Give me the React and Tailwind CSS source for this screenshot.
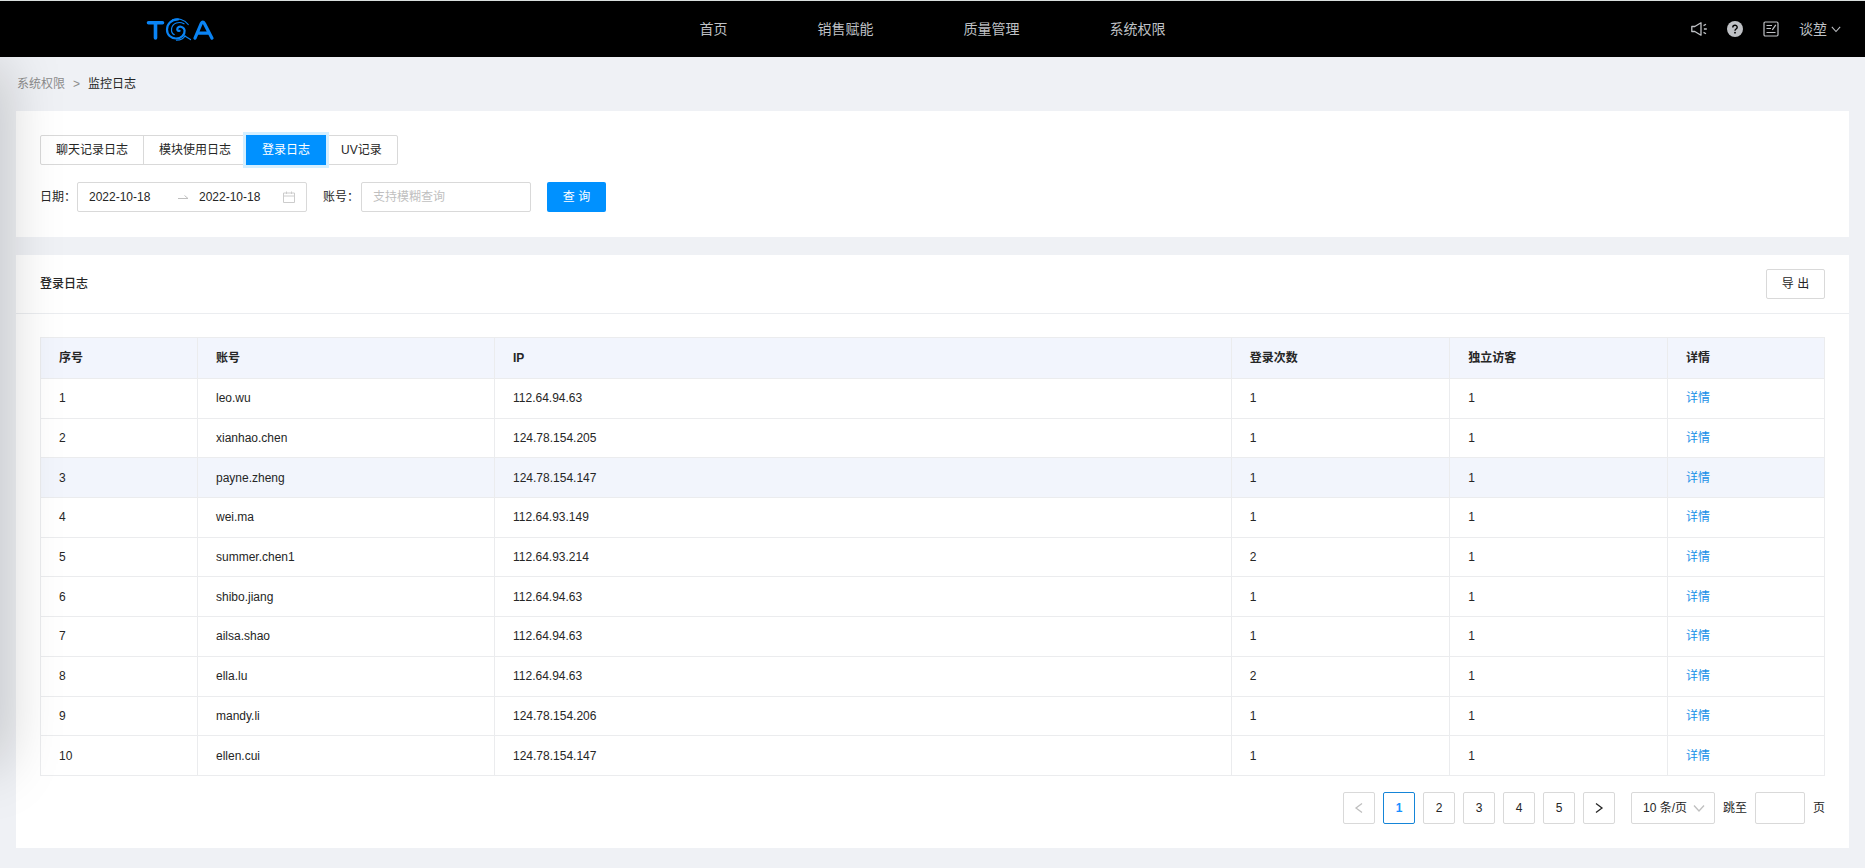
import React, { useState } from 'react';

const NAV = ['首页', '销售赋能', '质量管理', '系统权限'];
const TABS = ['聊天记录日志', '模块使用日志', '登录日志', 'UV记录'];
const HEADERS = ['序号', '账号', 'IP', '登录次数', '独立访客', '详情'];
const ROWS = [
  ['leo.wu', '112.64.94.63', 1, 1],
  ['xianhao.chen', '124.78.154.205', 1, 1],
  ['payne.zheng', '124.78.154.147', 1, 1],
  ['wei.ma', '112.64.93.149', 1, 1],
  ['summer.chen1', '112.64.93.214', 2, 1],
  ['shibo.jiang', '112.64.94.63', 1, 1],
  ['ailsa.shao', '112.64.94.63', 1, 1],
  ['ella.lu', '112.64.94.63', 2, 1],
  ['mandy.li', '124.78.154.206', 1, 1],
  ['ellen.cui', '124.78.154.147', 1, 1],
];

function Logo() {
  return (
    <svg width="70" height="26" viewBox="0 0 70 26" fill="none" stroke="#0a84f5" role="img" aria-label="TGA">
      <path d="M3.5 6.8H17.500M10.500 7V22" strokeWidth="3.6" strokeLinecap="round" />
      <path d="M50 22.200L56.200 7.500Q57.800 4.800 59.400 7.500L67 22.200M53 17.200H64.500" strokeWidth="3.200" strokeLinecap="round" strokeLinejoin="round" />
      <path d="M33 3.500C26 3.500 22 8 22 13.500C22 19 26 22.500 31 22.500C36.500 22.500 40 18.500 39.600 14.500C39.200 10.800 34.500 9.500 32.600 12C31.600 13.800 32.800 15.500 34.600 14.800" strokeWidth="2.200" strokeLinecap="round" />
      <path d="M43.200 8.500C39.500 3.500 33 1.800 27.500 3.800M39 7.800C34 5 27.500 7 26.600 12.500C26.200 15.500 27.500 17.800 29.200 18.600M31.500 24.200C36 24.200 39 22 40 19.500M39.800 20L45.500 23.600" strokeWidth="1.200" strokeLinecap="round" />
    </svg>
  );
}

function SpeakerIcon() {
  return (
    <svg width="16" height="16" viewBox="0 0 16 16" fill="none" stroke="currentColor" strokeWidth="1.300" strokeLinejoin="round">
      <path d="M.8 5.500H3.800L10 1.800V14.200L3.800 10.500H.8Z" />
      <path d="M12.500 4.600L15 3.200M12.900 8H15.800M12.500 11.400L15 12.800" />
    </svg>
  );
}

function HelpIcon() {
  return (
    <svg width="16" height="16" viewBox="0 0 16 16">
      <circle cx="8" cy="8" r="8" fill="currentColor" />
      <path d="M5.800 6.400C5.800 3.600 10.200 3.600 10.200 6.300C10.200 8 8 8 8 9.700" fill="none" stroke="#000" strokeWidth="1.400" />
      <circle cx="8" cy="11.700" r=".9" fill="#000" />
    </svg>
  );
}

function FormIcon() {
  return (
    <svg width="16" height="16" viewBox="0 0 16 16" fill="none" stroke="currentColor" strokeWidth="1.200">
      <rect x="1" y="1" width="14" height="14" rx="1.200" />
      <path d="M3.500 4.500H9M3.500 7.500H8M3.500 11.500H12.500M12.800 3.800L9.300 8.800" />
    </svg>
  );
}

function Chevron({ dir, className }) {
  const d = {
    down: 'M1 3.500L6 9L11 3.500',
    left: 'M9 1.500L3 6L9 10.500',
    right: 'M3 1.500L9 6L3 10.500',
  }[dir];
  return (
    <svg width="12" height="12" viewBox="0 0 12 12" fill="none" stroke="currentColor" strokeWidth="1.300" className={className}>
      <path d={d} />
    </svg>
  );
}

function CalendarIcon() {
  return (
    <svg width="12" height="12" viewBox="0 0 12 12" fill="none" stroke="currentColor" className="text-[#cccccc]">
      <path d="M.5 2H11.500V11.500H.5ZM.5 5H11.500M3.500 .5V3M8.500 .5V3" />
    </svg>
  );
}

export default function App() {
  const [tab, setTab] = useState(2);
  const [page, setPage] = useState(1);
  const pageButton = 'flex size-8 items-center justify-center rounded-xs border bg-white';

  return (
    <div className="relative min-h-screen overflow-hidden bg-[#eff1f5] font-['Liberation_Sans','Noto_Sans_CJK_SC',sans-serif] text-xs text-[#262626]">
      <header className="relative z-20 grid h-[57px] grid-cols-[1fr_auto_1fr] items-center border-t border-[#d9dedd] bg-black text-sm text-[#bfc1c5]">
        <a href="#home" className="ml-[145px] justify-self-start"><Logo /></a>
        <nav className="flex">
          {NAV.map((n) => (
            <a key={n} href="#nav" className="px-[45px] leading-5">{n}</a>
          ))}
        </nav>
        <div className="mr-6 flex items-center gap-5 justify-self-end">
          <button type="button" aria-label="公告"><SpeakerIcon /></button>
          <button type="button" aria-label="帮助"><HelpIcon /></button>
          <button type="button" aria-label="表单"><FormIcon /></button>
          <button type="button" className="flex items-center gap-1">谈堃<Chevron dir="down" className="size-2.5" /></button>
        </div>
      </header>

      <div aria-hidden="true" className="pointer-events-none absolute -left-10 top-16 z-10 h-[700px] w-10 shadow-[0_0_60px_rgba(0,0,0,0.26)]" />

      <main className="px-4 pb-5">
        <nav className="flex h-[54px] items-center gap-2 pl-px text-[#8c8c8c]">
          <a href="#system">系统权限</a>
          <span>&gt;</span>
          <span className="text-[#262626]">监控日志</span>
        </nav>

        <section className="mb-[18px] bg-white px-6 pb-[25px] pt-6">
          <div className="flex">
            {TABS.map((t, i) => (
              <button
                key={t}
                type="button"
                onClick={() => setTab(i)}
                className={
                  'h-[30px] border px-[15px] first:rounded-l-xs last:rounded-r-xs not-first:-ml-px ' +
                  (i === tab
                    ? 'relative border-[#0091ff] bg-[#0091ff] text-white shadow-[0_0_0_3px_#d5efff]'
                    : 'border-[#d9d9d9] bg-white')
                }
              >
                {t}
              </button>
            ))}
          </div>

          <form className="mt-[17px] flex items-center" onSubmit={(e) => e.preventDefault()}>
            <label htmlFor="from" className="w-[37px]">日期：</label>
            <div className="flex h-[30px] w-[230px] items-center rounded-xs border border-[#d9d9d9] px-[11px]">
              <input id="from" defaultValue="2022-10-18" className="w-[88px] outline-none" />
              <svg width="12" height="6" viewBox="0 0 12 6" fill="none" stroke="#bfbfbf" className="mr-2.5">
                <path d="M1 4.500H11L7.500 1.500" />
              </svg>
              <input aria-label="结束日期" defaultValue="2022-10-18" className="w-[84px] outline-none" />
              <CalendarIcon />
            </div>
            <label htmlFor="account" className="ml-4 w-[38px]">账号：</label>
            <input id="account" placeholder="支持模糊查询" className="h-[30px] w-[170px] rounded-xs border border-[#d9d9d9] px-[11px] outline-none placeholder:text-[#bfbfbf]" />
            <button type="submit" className="ml-4 h-[30px] w-[59px] rounded-xs bg-[#0091ff] text-white">查 询</button>
          </form>
        </section>

        <section className="bg-white">
          <div className="flex h-[59px] items-center justify-between border-b border-[#ebedf0] px-6">
            <h1 className="font-medium">登录日志</h1>
            <button type="button" className="h-[30px] w-[59px] rounded-xs border border-[#d9d9d9]">导 出</button>
          </div>
          <div className="px-6 pb-6 pt-[23px]">
            <table className="h-[439px] w-full table-fixed border-collapse border border-[#ebecee] text-left">
              <colgroup>
                <col className="w-[8.8%]" />
                <col className="w-[16.65%]" />
                <col className="w-[41.3%]" />
                <col className="w-[12.25%]" />
                <col className="w-[12.2%]" />
                <col className="w-[8.8%]" />
              </colgroup>
              <thead>
                <tr className="bg-[#f2f5fd]">
                  {HEADERS.map((h) => (
                    <th key={h} className="border border-[#ebecee] px-[18px] py-[11px] font-semibold leading-[18px]">{h}</th>
                  ))}
                </tr>
              </thead>
              <tbody>
                {ROWS.map((row, i) => (
                  <tr key={row[0]} className={i === 2 ? 'bg-[#f2f5fc]' : 'hover:bg-[#f2f5fc]'}>
                    {[i + 1, ...row].map((v, j) => (
                      <td key={j} className="border border-[#ebecee] px-[18px] py-2.5 leading-[18px]">{v}</td>
                    ))}
                    <td className="border border-[#ebecee] px-[18px] py-2.5 leading-[18px]">
                      <a href="#detail" className="text-[#1890e8]">详情</a>
                    </td>
                  </tr>
                ))}
              </tbody>
            </table>

            <div className="mt-4 flex items-center justify-end gap-2">
              <button type="button" aria-label="上一页" disabled className={pageButton + ' border-[#d9d9d9] text-[#bfbfbf]'}><Chevron dir="left" /></button>
              {[1, 2, 3, 4, 5].map((p) => (
                <button
                  key={p}
                  type="button"
                  onClick={() => setPage(p)}
                  className={pageButton + (p === page ? ' border-[#1585d8] font-semibold text-[#1890ff]' : ' border-[#d9d9d9]')}
                >
                  {p}
                </button>
              ))}
              <button type="button" aria-label="下一页" className={pageButton + ' border-[#d9d9d9]'}><Chevron dir="right" /></button>
              <div className="relative ml-2">
                <select aria-label="每页条数" className="h-8 w-[84px] appearance-none rounded-xs border border-[#d9d9d9] bg-white pl-[11px] outline-none">
                  <option>10 条/页</option>
                  <option>20 条/页</option>
                </select>
                <Chevron dir="down" className="pointer-events-none absolute right-2.5 top-2.5 size-3 text-[#bfbfbf]" />
              </div>
              <label htmlFor="jump">跳至</label>
              <input id="jump" className="h-8 w-[50px] rounded-xs border border-[#d9d9d9] px-2 outline-none" />
              <span>页</span>
            </div>
          </div>
        </section>
      </main>
    </div>
  );
}
